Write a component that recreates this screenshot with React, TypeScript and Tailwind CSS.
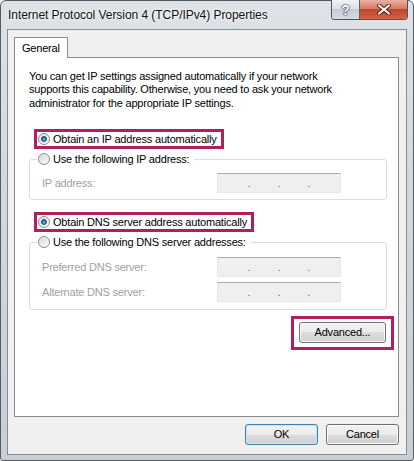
import React from "react";

function Radio({ checked }: { checked?: boolean }) {
  return (
    <span className="flex h-[12px] w-[12px] shrink-0 items-center justify-center rounded-full border border-[#8a8c8e] bg-[linear-gradient(135deg,#cfd1d3,#f6f6f6_75%)] shadow-[inset_0_0_0_1px_#f2f2f2]">
      {checked && (
        <span className="h-[6px] w-[6px] rounded-full border border-[#1c4a73] bg-[radial-gradient(circle_at_50%_60%,#7fc6ef,#2a71ad_60%,#1b4f80)]" />
      )}
    </span>
  );
}

function IpBox() {
  return (
    <div className="flex h-[20px] w-[124px] border border-[#e3e9ef] border-t-[#abadb3] bg-[#efefef] pl-[16px] text-[#6d6d6d]">
      <span className="w-[30px] text-center leading-[18px]">.</span>
      <span className="w-[30px] text-center leading-[18px]">.</span>
      <span className="w-[30px] text-center leading-[18px]">.</span>
    </div>
  );
}

function Btn({ children, w, def }: { children: React.ReactNode; w: string; def?: boolean }) {
  return (
    <div
      className={
        "flex h-[21px] items-center justify-center rounded-[3px] border bg-[linear-gradient(#f2f2f2_0%,#ebebeb_50%,#dddddd_50%,#cfcfcf_100%)] text-black " +
        w +
        (def
          ? " border-[#3c7fb1] shadow-[inset_0_0_0_1px_#c7e6f8]"
          : " border-[#707070] shadow-[inset_0_0_0_1px_#fbfbfb]")
      }
    >
      {children}
    </div>
  );
}

export default function App() {
  return (
    <div className="h-[461px] w-[414px] bg-white font-['Liberation_Sans',Arial,sans-serif] text-[11px] tracking-[-0.2px] text-black">
      <div className="flex h-[461px] w-[414px] flex-col rounded-t-[6px] rounded-b-[3px] border border-[#555b62] bg-[linear-gradient(to_bottom,#dde2e7,#d2d8de_40%,#c8ced5)]">
        {/* Title bar */}
        <div className="flex h-[28px] shrink-0 items-start justify-between">
          <div className="ml-[7px] mt-[6px] text-[12px] leading-[16px] tracking-[-0.05px] text-[#111] [text-shadow:0_0_6px_#ffffff,0_0_3px_#ffffff]">
            Internet Protocol Version 4 (TCP/IPv4) Properties
          </div>
          <div className="-mt-px mr-[5px] flex h-[20px] overflow-hidden rounded-b-[4px] border border-[#4d545c] border-t-0">
            <div className="flex w-[28px] items-center justify-center border-r border-[#59616a] bg-[linear-gradient(#f1f3f5,#dde2e7_45%,#c4cbd3_50%,#d6dce2)] text-[14px] font-bold leading-none tracking-normal text-white [text-shadow:0_0_1px_#2e3740,0_0_1px_#2e3740,0_0_2px_#2e3740]">
              ?
            </div>
            <div className="flex w-[47px] items-center justify-center bg-[linear-gradient(#eab0a4,#d87a63_45%,#c2452b_50%,#cf6445)]">
              <svg width="14" height="11" viewBox="0 0 14 11">
                <path d="M2 1.5 L12 9.5 M12 1.5 L2 9.5" stroke="#4a1a10" strokeWidth="4" strokeLinecap="round" />
                <path d="M2 1.5 L12 9.5 M12 1.5 L2 9.5" stroke="#ffffff" strokeWidth="2.2" strokeLinecap="round" />
              </svg>
            </div>
          </div>
        </div>

        {/* Client area */}
        <div className="mx-[6px] flex h-[426px] w-[400px] flex-col border border-[#868c93] bg-[#f0f0f0] pl-[6px] pt-[7px]">
          {/* Tab */}
          <div className="relative z-10 -mb-px flex h-[21px] w-[54px] items-center border border-b-0 border-[#898c95] bg-white pl-[7px] leading-[14px]">
            General
          </div>
          {/* Panel */}
          <div className="flex h-[360px] w-[385px] flex-col border border-[#898c95] bg-white pl-[14px] pt-[12px]">
            <p className="leading-[13.4px]">
              You can get IP settings assigned automatically if your network
              <br />
              supports this capability. Otherwise, you need to ask your network
              <br />
              administrator for the appropriate IP settings.
            </p>

            <div className="ml-[5px] mt-[19px] flex h-[20px] w-fit items-center gap-[3px] border-[3px] border-[#b21f5e] pl-px pr-[4px]">
              <Radio checked />
              <span className="leading-[14px]">Obtain an IP address automatically</span>
            </div>

            <fieldset className="w-[358px] rounded-[3px] border border-[#d5dfe5] pb-[6px] pl-[7px] pt-[4px]">
              <legend className="flex h-[20px] items-center gap-[3px] pl-px pr-[5px]">
                <Radio />
                <span>Use the following IP address:</span>
              </legend>
              <div className="flex items-center">
                <span className="w-[180px] pl-[5px] text-[#a0a0a0]">IP address:</span>
                <IpBox />
              </div>
            </fieldset>

            <div className="ml-[5px] mt-[12px] flex h-[20px] w-fit items-center gap-[3px] border-[3px] border-[#b21f5e] pl-px pr-[4px]">
              <Radio checked />
              <span className="leading-[14px]">Obtain DNS server address automatically</span>
            </div>

            <fieldset className="w-[358px] rounded-[3px] border border-[#d5dfe5] pb-[7px] pl-[7px] pt-[5px]">
              <legend className="flex h-[20px] items-center gap-[3px] pl-px pr-[5px]">
                <Radio />
                <span>Use the following DNS server addresses:</span>
              </legend>
              <div className="flex flex-col gap-[5px]">
                <div className="flex items-center">
                  <span className="w-[180px] pl-[5px] text-[#a0a0a0]">Preferred DNS server:</span>
                  <IpBox />
                </div>
                <div className="flex items-center">
                  <span className="w-[180px] pl-[5px] text-[#a0a0a0]">Alternate DNS server:</span>
                  <IpBox />
                </div>
              </div>
            </fieldset>

            <div className="mr-[4px] mt-[6px] self-end border-[3px] border-[#b21f5e] px-[5px] pb-[4px] pt-[3px]">
              <Btn w="w-[87px]">Advanced...</Btn>
            </div>
          </div>

          {/* Bottom buttons */}
          <div className="mt-[7px] flex w-[385px] justify-end gap-[8px]">
            <Btn w="w-[73px]" def>
              OK
            </Btn>
            <Btn w="w-[73px]">Cancel</Btn>
          </div>
        </div>
      </div>
    </div>
  );
}
